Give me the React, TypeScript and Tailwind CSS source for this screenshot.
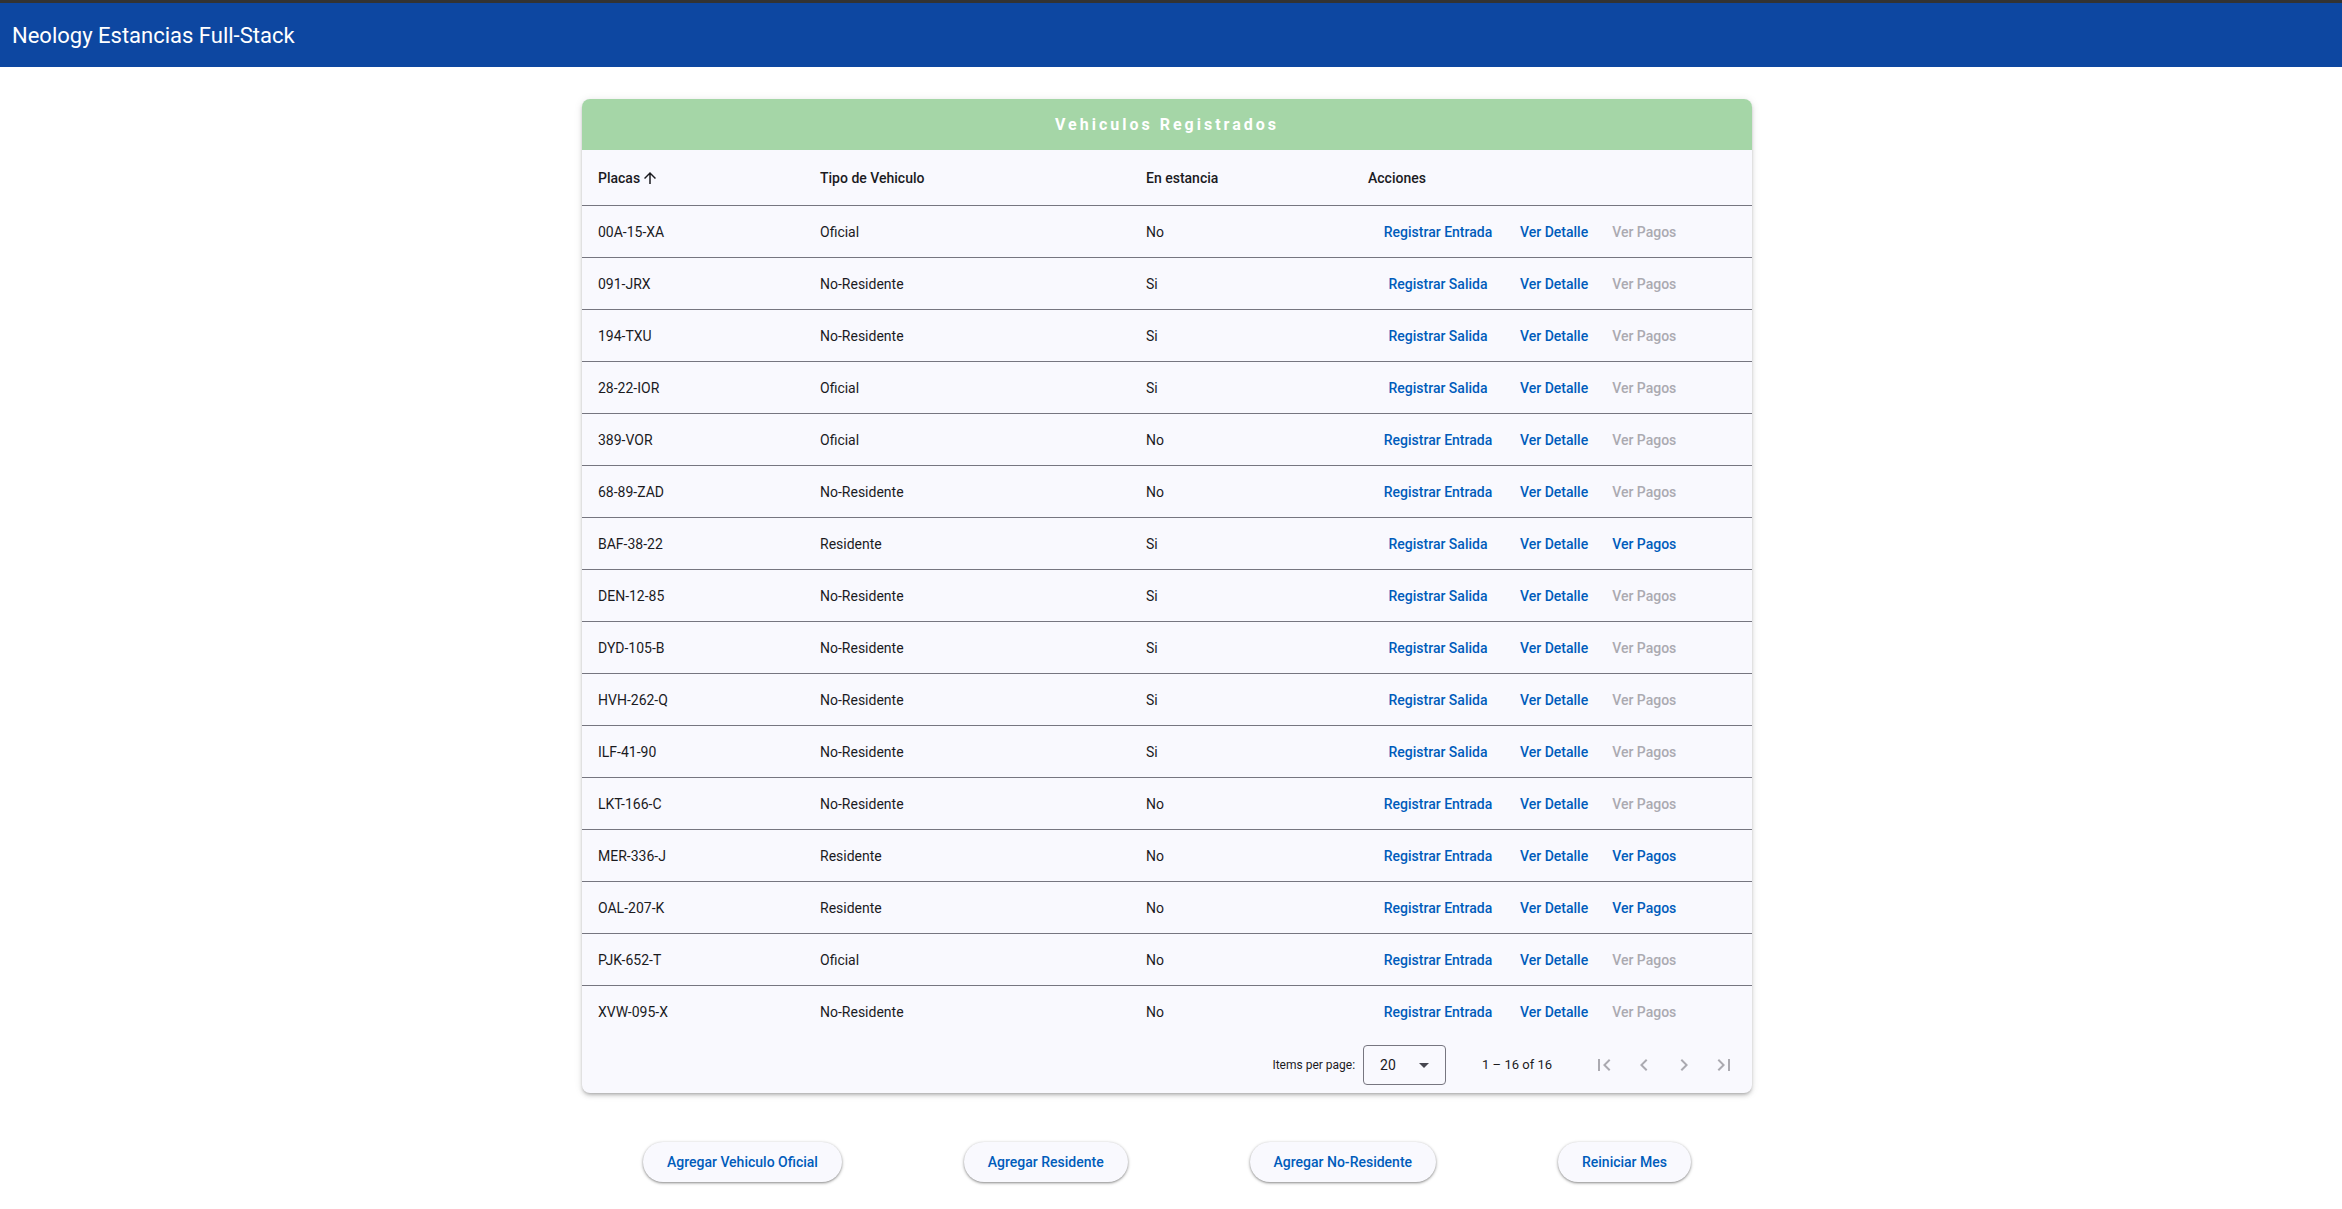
import React from 'react';

type Vehiculo = {
  placa: string;
  tipo: 'Oficial' | 'Residente' | 'No-Residente';
  enEstancia: boolean;
};

const vehiculos: Vehiculo[] = [
  { placa: '00A-15-XA', tipo: 'Oficial', enEstancia: false },
  { placa: '091-JRX', tipo: 'No-Residente', enEstancia: true },
  { placa: '194-TXU', tipo: 'No-Residente', enEstancia: true },
  { placa: '28-22-IOR', tipo: 'Oficial', enEstancia: true },
  { placa: '389-VOR', tipo: 'Oficial', enEstancia: false },
  { placa: '68-89-ZAD', tipo: 'No-Residente', enEstancia: false },
  { placa: 'BAF-38-22', tipo: 'Residente', enEstancia: true },
  { placa: 'DEN-12-85', tipo: 'No-Residente', enEstancia: true },
  { placa: 'DYD-105-B', tipo: 'No-Residente', enEstancia: true },
  { placa: 'HVH-262-Q', tipo: 'No-Residente', enEstancia: true },
  { placa: 'ILF-41-90', tipo: 'No-Residente', enEstancia: true },
  { placa: 'LKT-166-C', tipo: 'No-Residente', enEstancia: false },
  { placa: 'MER-336-J', tipo: 'Residente', enEstancia: false },
  { placa: 'OAL-207-K', tipo: 'Residente', enEstancia: false },
  { placa: 'PJK-652-T', tipo: 'Oficial', enEstancia: false },
  { placa: 'XVW-095-X', tipo: 'No-Residente', enEstancia: false },
];

const cols = 'grid grid-cols-[222px_326px_222px_1fr]';

const Icon: React.FC<{ d: string; className?: string; size?: number }> = ({ d, className, size = 24 }) => (
  <svg width={size} height={size} viewBox="0 0 24 24" className={className} fill="currentColor">
    <path d={d} />
  </svg>
);

const PagButton: React.FC<{ d: string }> = ({ d }) => (
  <button className="w-10 h-10 flex items-center justify-center text-[#abaab1]" disabled>
    <Icon d={d} />
  </button>
);

const App: React.FC = () => {
  return (
    <div className="min-h-screen bg-white font-['Roboto','Liberation_Sans',sans-serif] text-[#1b1b1f]">
      <div className="h-[3px] bg-[#333333]" />
      <header className="h-16 bg-[#0d47a1] flex items-center px-3">
        <span className="text-[22px] text-white">Neology Estancias Full-Stack</span>
      </header>

      <div className="flex justify-center pr-2">
        <main className="w-[1170px] mt-8">
          <div className="rounded-lg overflow-hidden bg-[#f9f9fe] shadow-[0_2px_3px_-1px_rgba(0,0,0,0.2),0_3px_4px_0_rgba(0,0,0,0.12),0_1px_8px_0_rgba(0,0,0,0.1)]">
            <div className="h-[51px] bg-[#a5d6a7] flex items-center justify-center">
              <span className="text-white font-bold text-base tracking-[3px]">Vehiculos Registrados</span>
            </div>

            <div className={`${cols} h-[55px] items-center text-sm font-medium text-[#1b1b1f]`}>
              <div className="px-4 flex items-center">
                Placas
                <Icon size={18} className="ml-px" d="M4 12l1.41 1.41L11 7.83V20h2V7.83l5.58 5.59L20 12l-8-8-8 8z" />
              </div>
              <div className="px-4">Tipo de Vehiculo</div>
              <div className="px-4">En estancia</div>
              <div className="px-4">Acciones</div>
            </div>

            {vehiculos.map((v) => {
              const pagos = v.tipo === 'Residente';
              return (
                <div key={v.placa} className={`${cols} h-[52px] items-center border-t border-[#767680] text-sm`}>
                  <div className="px-4">{v.placa}</div>
                  <div className="px-4">{v.tipo}</div>
                  <div className="px-4">{v.enEstancia ? 'Si' : 'No'}</div>
                  <div className="px-4 flex items-center text-sm font-medium">
                    <button className="w-[140px] h-10 text-center text-[#005cbb]">
                      {v.enEstancia ? 'Registrar Salida' : 'Registrar Entrada'}
                    </button>
                    <button className="h-10 px-3 text-[#005cbb]">Ver Detalle</button>
                    <button className={`h-10 px-3 ${pagos ? 'text-[#005cbb]' : 'text-[#abaab1]'}`}>Ver Pagos</button>
                  </div>
                </div>
              );
            })}

            <div className="h-14 flex items-center justify-end pr-2 text-xs text-[#1b1b1f]">
              <span className="mr-2">Items per page:</span>
              <div className="w-[83px] h-10 border border-[#777680] rounded flex items-center justify-between pl-4 pr-4 text-sm text-[#1b1b1f]">
                <span>20</span>
                <span className="w-0 h-0 border-l-[5px] border-r-[5px] border-t-[5px] border-l-transparent border-r-transparent border-t-[#46464f]" />
              </div>
              <span className="ml-9 mr-8 text-[13px] text-[#1b1b1f]">1 – 16 of 16</span>
              <PagButton d="M18.41 16.59L13.82 12l4.59-4.59L17 6l-6 6 6 6zM6 6h2v12H6z" />
              <PagButton d="M15.41 7.41L14 6l-6 6 6 6 1.41-1.41L10.83 12z" />
              <PagButton d="M10 6L8.59 7.41 13.17 12l-4.58 4.59L10 18l6-6z" />
              <PagButton d="M5.59 7.41L10.18 12l-4.59 4.59L7 18l6-6-6-6zM16 6h2v12h-2z" />
            </div>
          </div>

          <div className="flex justify-around mt-[49px] pb-8">
            {['Agregar Vehiculo Oficial', 'Agregar Residente', 'Agregar No-Residente', 'Reiniciar Mes'].map((label) => (
              <button
                key={label}
                className="h-10 px-6 rounded-full bg-[#f9f9fe] text-[#005cbb] text-sm font-medium shadow-[0_1px_2px_0_rgba(0,0,0,0.3),0_1px_3px_1px_rgba(0,0,0,0.15)]"
              >
                {label}
              </button>
            ))}
          </div>
        </main>
      </div>
    </div>
  );
};

export default App;
